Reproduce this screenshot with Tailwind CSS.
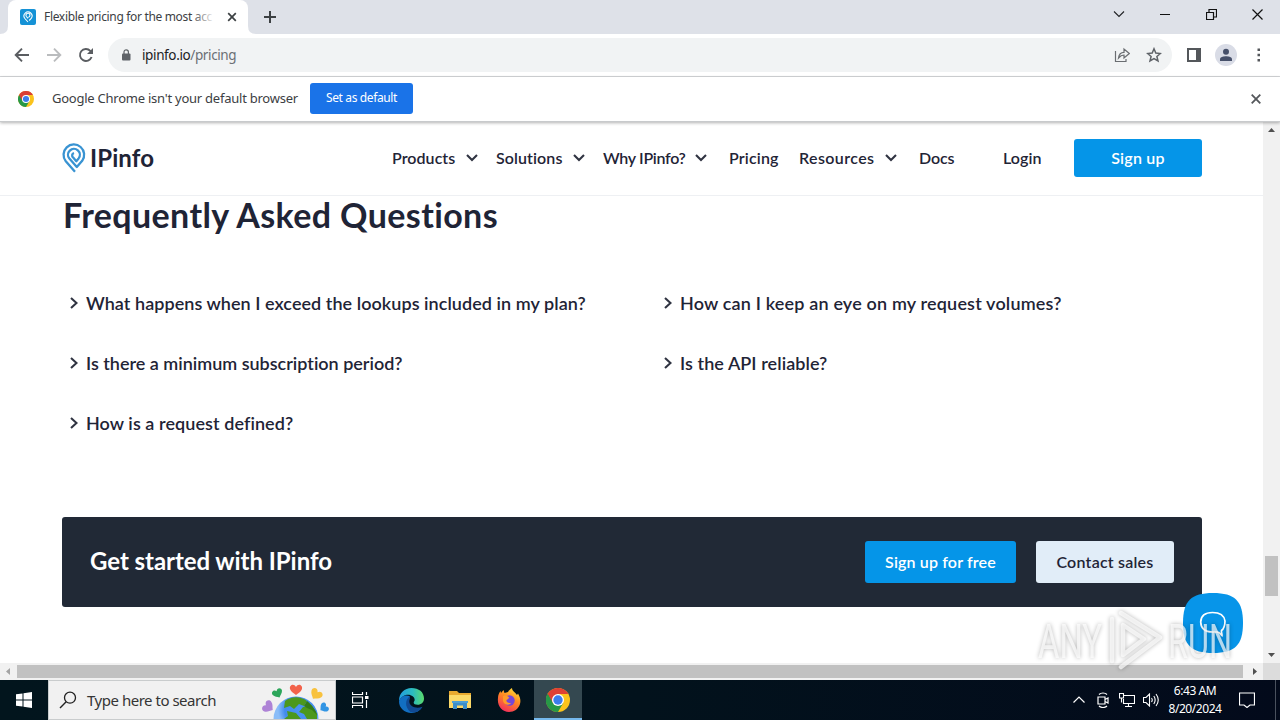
<!DOCTYPE html>
<html lang="en">
<head>
    <meta charset="UTF-8">
    <meta name="viewport" content="width=device-width, initial-scale=1.0">
    <title>Flexible pricing for the most accurate IP data</title>
    <script src="https://cdn.jsdelivr.net/npm/@tailwindcss/browser@4"></script>
</head>
<body class="w-[1280px] h-[720px] overflow-hidden bg-white font-['Noto_Sans',sans-serif] text-[#202124]">
    <div class="relative w-[1280px] h-[720px] flex flex-col">

        <!-- Tab strip -->
        <div class="h-[34px] shrink-0 bg-[#dee1e8] flex items-end">
            <svg class="w-2 h-2" viewBox="0 0 8 8"><path d="M0 8Q8 8 8 0V8Z" fill="#fff"/></svg>
            <div class="w-[240px] h-[34px] bg-white rounded-t-lg flex items-center pl-3">
                <svg class="w-4 h-4 shrink-0" viewBox="0 0 16 16">
                    <rect width="16" height="16" rx="2" fill="#1592d6"/>
                    <path d="M8 13 4.9 9.5A4 4 0 1 1 11.2 9.4L9.2 11.5M8 9.3 6.4 7.5A2 2 0 1 1 8.3 8.2" fill="none" stroke="#fff" stroke-width="1.1"/>
                </svg>
                <div class="relative ml-2 w-[171px] whitespace-nowrap text-[12px] leading-4 tracking-[-0.33px] text-[#3c4043]">
                    Flexible pricing for the most acc
                    <div class="absolute right-0 top-0 w-6 h-4 bg-linear-to-r from-white/0 to-white"></div>
                </div>
                <svg class="w-[10px] h-[10px] ml-3 shrink-0" viewBox="0 0 10 10"><path d="M1.2 1.2 8.8 8.8M8.8 1.2 1.2 8.8" stroke="#3c4043" stroke-width="1.7"/></svg>
            </div>
            <svg class="w-2 h-2" viewBox="0 0 8 8"><path d="M8 8Q0 8 0 0V8Z" fill="#fff"/></svg>
            <svg class="w-3 h-3 ml-2 mb-[11px]" viewBox="0 0 12 12"><path d="M6 0V12M0 6H12" stroke="#3c4043" stroke-width="2"/></svg>
            <div class="ml-auto h-[28px] flex items-center self-start pr-[17px]">
                <svg class="w-[12px] h-[12px]" viewBox="0 0 12 12"><path d="M1 3.5 6 8.5 11 3.5" fill="none" stroke="#202124" stroke-width="1.1"/></svg>
                <svg class="w-[10px] h-[10px] ml-[35px]" viewBox="0 0 10 10"><path d="M0 5.5H10" stroke="#111"/></svg>
                <svg class="w-[11px] h-[11px] ml-[36px]" viewBox="0 0 11 11"><path d="M.5 3.5H7.5V10.5H.5ZM3 3V.5H10.5V8H8" fill="none" stroke="#111" stroke-width="1.2"/></svg>
                <svg class="w-[11px] h-[11px] ml-[35px]" viewBox="0 0 11 11"><path d="M.5.5 10.5 10.5M10.5.5.5 10.5" stroke="#111" stroke-width="1.2"/></svg>
            </div>
        </div>

        <!-- Toolbar -->
        <div class="h-[43px] shrink-0 flex items-center border-b border-[#d5d7da] pl-[14px]">
            <svg class="w-4 h-4" viewBox="0 0 16 16"><path d="M15 8H2M8 1.7 1.7 8 8 14.3" fill="none" stroke="#5a5d61" stroke-width="1.9"/></svg>
            <svg class="w-4 h-4 ml-4" viewBox="0 0 16 16"><path d="M1 8H14M8 1.7 14.3 8 8 14.3" fill="none" stroke="#babcbe" stroke-width="1.9"/></svg>
            <svg class="w-4 h-4 ml-4" viewBox="0 0 16 16"><path d="M13.6 10A6 6 0 1 1 12.3 3.8L13.5 5" fill="none" stroke="#5a5d61" stroke-width="1.9"/><path d="M15 1V7H9Z" fill="#5a5d61"/></svg>
            <div class="ml-[14px] w-[1064px] h-[34px] rounded-full bg-[#f1f3f4] flex items-center pl-[13px] pr-[10px]">
                <svg class="w-[10px] h-3" viewBox="0 0 10 12"><rect x="1" y="4.5" width="8.5" height="7" rx="1" fill="#5f6368"/><path d="M3 5V3a2.2 2.2 0 0 1 4.4 0V5" fill="none" stroke="#5f6368" stroke-width="1.2"/></svg>
                <div class="ml-[11px] text-[13.5px] tracking-[-0.38px] text-[#6b6f74]"><span class="text-[#202124]">ipinfo.io</span>/pricing</div>
                <svg class="w-4 h-4 ml-auto" viewBox="0 0 16 16"><path d="M1.5 4V14.500H12V12M4.500 11C5 7 7 5.300 10 5.300V2L15.300 6.500 10 11V8C8 8 6.300 8.800 4.500 11Z" fill="none" stroke="#6a6d71" stroke-width="1.2"/></svg>
                <svg class="w-4 h-4 ml-4" viewBox="0 0 16 16"><path d="M8 1.800 9.800 6.100 14.400 6.500 10.900 9.500 12 14 8 11.600 4 14 5.100 9.500 1.600 6.500 6.200 6.100Z" fill="none" stroke="#5f6368" stroke-width="1.500"/></svg>
            </div>
            <svg class="w-[14px] h-[14px] ml-[15px]" viewBox="0 0 14 14"><path d="M0 0H14V14H0ZM2 2V12H9V2Z" fill="#54575b"/></svg>
            <svg class="w-[22px] h-[22px] ml-[14px]" viewBox="0 0 22 22"><circle cx="11" cy="11" r="11" fill="#d9dce6"/><circle cx="11" cy="7.700" r="3" fill="#46506a"/><path d="M5 17V15.500C5 12.900 8.500 12.300 11 12.300S17 12.900 17 15.500V17Z" fill="#46506a"/></svg>
            <svg class="w-1 h-[14px] ml-[20px]" viewBox="0 0 4 14"><path d="M.5.500H3V3H.5ZM.5 5.700H3V8.200H.5ZM.5 11H3V13.500H.5Z" fill="#54575b"/></svg>
        </div>

        <!-- Default browser bar -->
        <div class="relative z-10 h-[45px] shrink-0 bg-white flex items-center pl-[18px] border-b border-[#c8cacc] shadow-[0_1px_3px_rgba(0,0,0,0.3)]">
            <svg class="w-4 h-4" viewBox="0 0 24 24">
                <circle cx="12" cy="12" r="12" fill="#fbc31c"/>
                <path d="M1.600 6A12 12 0 0 0 12 24L17.200 15 12 12Z" fill="#279847"/>
                <path d="M1.600 6A12 12 0 0 1 22.400 6H12L6.800 15Z" fill="#d93e35"/>
                <circle cx="12" cy="12" r="6" fill="#fff"/><circle cx="12" cy="12" r="4.600" fill="#3b7ded"/>
            </svg>
            <div class="ml-[18px] w-[258px] whitespace-nowrap text-[13px] tracking-[-0.24px] text-[#3c4043]">Google Chrome isn't your default browser</div>
            <div class="w-[103px] h-[31px] -mt-[2px] rounded-[3px] bg-[#1a73e8] flex items-center justify-center text-white text-[12px] tracking-[-0.38px]">Set as default</div>
            <svg class="w-[10px] h-[10px] ml-auto mr-[19px]" viewBox="0 0 10 10"><path d="M.7.700 9.300 9.300M9.300.7.700 9.300" stroke="#54575b" stroke-width="1.800"/></svg>
        </div>

        <!-- Page and vertical scrollbar -->
        <div class="h-[541px] shrink-0 flex">
            <div class="w-[1263px] h-full flex flex-col font-['Lato',sans-serif] text-[#1f2436]">
                <div class="h-[74px] shrink-0 flex items-center border-b border-[#eef0f3] pl-[62px] pb-px font-semibold text-[16px]">
                    <svg class="w-6 h-[30px]" viewBox="0 0 24 30"><path d="M13 28.800 3.800 18.200A10.300 10.300 0 1 1 20.200 17.800L14.800 24L7.400 15.600A5.900 5.900 0 1 1 16.600 15.400L14.300 18.200L11.200 14.600A2.600 2.600 0 0 1 12 10" fill="none" stroke="#3993d2" stroke-width="2.300" stroke-linejoin="round"/></svg>
                    <div class="ml-1 w-[302px] text-[24px] font-bold tracking-[0.1px] leading-6">IPinfo</div>
                    <div class="w-[74px] tracking-[0.05px]">Products</div>
                    <svg class="w-3 h-2" viewBox="0 0 12 8"><path d="M1 1 6 6 11 1" fill="none" stroke="#303442" stroke-width="2.100"/></svg>
                    <div class="ml-[18px] w-[77px] tracking-[0.1px]">Solutions</div>
                    <svg class="w-3 h-2" viewBox="0 0 12 8"><path d="M1 1 6 6 11 1" fill="none" stroke="#303442" stroke-width="2.100"/></svg>
                    <div class="ml-[18px] w-[92px] whitespace-nowrap tracking-[-0.3px]">Why IPinfo?</div>
                    <svg class="w-3 h-2" viewBox="0 0 12 8"><path d="M1 1 6 6 11 1" fill="none" stroke="#303442" stroke-width="2.100"/></svg>
                    <div class="ml-[22px] w-[70px] tracking-[0.15px]">Pricing</div>
                    <div class="w-[86px] tracking-[0.4px]">Resources</div>
                    <svg class="w-3 h-2" viewBox="0 0 12 8"><path d="M1 1 6 6 11 1" fill="none" stroke="#303442" stroke-width="2.100"/></svg>
                    <div class="ml-[22px] w-[84px] tracking-[-0.1px]">Docs</div>
                    <div class="w-[71px] tracking-[0.1px]">Login</div>
                    <div class="w-[128px] h-[38px] rounded-[3px] bg-[#0595e8] text-white flex items-center justify-center tracking-[0.25px]">Sign up</div>
                </div>

                <div class="pl-[62px] w-[1202px]">
                    <h1 class="h-[40px] pl-px text-[34px] leading-[38px] font-bold whitespace-nowrap tracking-[0.38px]">Frequently Asked Questions</h1>
                    <div class="mt-[57px] grid grid-cols-[594px_1fr] auto-rows-[20px] gap-y-[40px] pl-[8px] text-[18px] leading-5 font-semibold whitespace-nowrap">
                        <div class="flex items-center gap-2 tracking-[0.05px]"><svg class="w-2 h-3" viewBox="0 0 8 12"><path d="M1 1 6.500 6 1 11" fill="none" stroke="#303442" stroke-width="2.100"/></svg>What happens when I exceed the lookups included in my plan?</div>
                        <div class="flex items-center gap-2 tracking-[0.17px]"><svg class="w-2 h-3" viewBox="0 0 8 12"><path d="M1 1 6.500 6 1 11" fill="none" stroke="#303442" stroke-width="2.100"/></svg>How can I keep an eye on my request volumes?</div>
                        <div class="flex items-center gap-2 tracking-[-0.01px]"><svg class="w-2 h-3" viewBox="0 0 8 12"><path d="M1 1 6.500 6 1 11" fill="none" stroke="#303442" stroke-width="2.100"/></svg>Is there a minimum subscription period?</div>
                        <div class="flex items-center gap-2 tracking-[0.07px]"><svg class="w-2 h-3" viewBox="0 0 8 12"><path d="M1 1 6.500 6 1 11" fill="none" stroke="#303442" stroke-width="2.100"/></svg>Is the API reliable?</div>
                        <div class="flex items-center gap-2 tracking-[0.07px]"><svg class="w-2 h-3" viewBox="0 0 8 12"><path d="M1 1 6.500 6 1 11" fill="none" stroke="#303442" stroke-width="2.100"/></svg>How is a request defined?</div>
                    </div>
                    <div class="mt-[84px] w-[1140px] h-[90px] rounded-[3px] bg-[#212936] flex items-center px-7 text-[16px] font-semibold">
                        <div class="text-[24px] font-bold text-white tracking-[-0.05px] -mt-[2px]">Get started with IPinfo</div>
                        <div class="ml-auto w-[151px] h-[42px] rounded-[3px] bg-[#0595e8] text-white flex items-center justify-center tracking-[0.15px]">Sign up for free</div>
                        <div class="ml-5 w-[138px] h-[42px] rounded-[3px] bg-[#e1edf8] flex items-center justify-center tracking-[0.22px]">Contact sales</div>
                    </div>
                </div>
            </div>
            <div class="w-[17px] h-full bg-[#f1f1f1] flex flex-col items-center justify-between py-[6px]">
                <svg class="w-[7px] h-1" viewBox="0 0 7 4"><path d="M0 4 3.500 0 7 4Z" fill="#505050"/></svg>
                <div class="w-[13px] h-10 mt-[424px] bg-[#c1c1c1]"></div>
                <svg class="w-[7px] h-1 mt-auto" viewBox="0 0 7 4"><path d="M0 0 3.500 4 7 0Z" fill="#505050"/></svg>
            </div>
        </div>

        <!-- Horizontal scrollbar -->
        <div class="h-[17px] shrink-0 bg-[#f1f1f1] flex items-center">
            <svg class="w-1 h-[7px] ml-[6px]" viewBox="0 0 4 7"><path d="M4 0 0 3.500 4 7Z" fill="#a3a3a3"/></svg>
            <div class="ml-[7px] w-[1226px] h-[13px] bg-[#c1c1c1]"></div>
            <svg class="w-1 h-[7px] ml-[10px]" viewBox="0 0 4 7"><path d="M0 0 4 3.500 0 7Z" fill="#505050"/></svg>
            <div class="ml-auto w-[17px] h-full bg-[#dcdcdc]"></div>
        </div>

        <!-- Taskbar -->
        <div class="h-10 shrink-0 bg-linear-to-r from-[#02151d] via-[#02121c] to-[#030a1b] flex items-center text-white">
            <svg class="w-4 h-4 ml-4" viewBox="0 0 16 16"><path d="M0 2.300 6.500 1.400V7.500H0ZM7.500 1.200 16 0V7.500H7.500ZM0 8.500H6.500V14.600L0 13.700ZM7.500 8.500H16V16L7.500 14.800Z" fill="#fff"/></svg>
            <div class="ml-4 w-[288px] h-10 bg-[#f1f1f1] border border-[#c9cccd] flex items-center text-[#353535]">
                <svg class="w-[18px] h-[18px] ml-[10px]" viewBox="0 0 18 18"><circle cx="11" cy="6.700" r="5.500" fill="none" stroke="#222" stroke-width="1.300"/><path d="M7.200 10.800 1 17" stroke="#222" stroke-width="1.400"/></svg>
                <div class="ml-[10px] w-[174px] text-[15px] tracking-[-0.48px] whitespace-nowrap">Type here to search</div>
                <svg class="w-[70px] h-[38px]" viewBox="0 0 70 38">
                    <defs><radialGradient id="sea" cx=".6" cy=".3"><stop offset="0" stop-color="#4b95f3"/><stop offset=".7" stop-color="#438bec"/><stop offset="1" stop-color="#8abdf8"/></radialGradient></defs>
                    <circle cx="35" cy="38" r="22.500" fill="url(#sea)"/>
                    <path d="M24 20C31 15 39 15 46 20L43 25 38 23 33 28 29 25 23 27ZM42 26C50 24 54 28 56 33V38H46L43 33 38 31ZM26 30 35 32 40 38H23L27 35Z" fill="#4c981d"/>
                    <path d="M46 20C51 24 55 29 56 34L51 29 46 27 43 25Z" fill="#347c17"/>
                    <path d="M0-1C-2-5-7-3-6 1-5 4-2 5 0 7 2 5 5 4 6 1 7-3 2-5 0-1Z" transform="translate(35 7)" fill="#f2624b"/>
                    <path d="M0-1C-2-5-7-3-6 1-5 4-2 5 0 7 2 5 5 4 6 1 7-3 2-5 0-1Z" transform="translate(16 11) rotate(-25) scale(.85)" fill="#2ca65a"/>
                    <path d="M0-1C-2-5-7-3-6 1-5 4-2 5 0 7 2 5 5 4 6 1 7-3 2-5 0-1Z" transform="translate(56 12) rotate(35)" fill="#f8c23e"/>
                    <path d="M0-1C-2-5-7-3-6 1-5 4-2 5 0 7 2 5 5 4 6 1 7-3 2-5 0-1Z" transform="translate(6 25) rotate(-55)" fill="#ae83d6"/>
                    <path d="M0-1C-2-5-7-3-6 1-5 4-2 5 0 7 2 5 5 4 6 1 7-3 2-5 0-1Z" transform="translate(64 26) rotate(55) scale(.8)" fill="#3295e4"/>
                </svg>
            </div>
            <svg class="w-[17px] h-4 ml-4" viewBox="0 0 17 16"><path d="M.5 0V2.500H10.500V0M.5 5H10.500V11H.5ZM.5 16V13.500H10.500V16M14.500 0V3M14.500 8V16" fill="none" stroke="#fff" stroke-width="1.200"/><path d="M13 4H16.500V7H13Z" fill="#fff"/></svg>
            <svg class="w-[25px] h-[25px] ml-[30px]" viewBox="0 0 24 24">
                <defs>
                    <linearGradient id="edge" x1="0" x2="1"><stop stop-color="#239ee0"/><stop offset=".55" stop-color="#2bbcc0"/><stop offset="1" stop-color="#5bdb6b"/></linearGradient>
                </defs>
                <path d="M0 13C-.2 5 5 0 12 0 19 0 24 4 24 10 24 14 21 16 18 16 14.500 16 13.500 14.500 14.500 13 17 9 10 4 4 8 2 9 .7 11 0 13Z" fill="url(#edge)"/>
                <path d="M0 13C1 8 6 6 10.500 8 7 12 9 19 15 20 18 20.500 20.500 19.500 22.500 18 20 22 16.500 24 12 24 5 24 0 19 0 13Z" fill="#126fc2"/>
                <path d="M10.500 8C6 11 5 18 11 23 16 24.500 20.500 21.500 22.500 18 16 21 7.500 17 10.500 10Z" fill="#114a93"/>
            </svg>
            <svg class="w-[22px] h-[20px] ml-[25px]" viewBox="0 0 22 20"><path d="M0 1H8L10 3H22V18H0Z" fill="#e8a92f"/><path d="M0 5H22V18H0Z" fill="#fbd968"/><path d="M4 11H18V19H14V15.500H8V19H4Z" fill="#3b8fca"/><path d="M3 11H19V13H3Z" fill="#4ba0d7"/></svg>
            <svg class="w-6 h-6 ml-[26px]" viewBox="0 0 24 24">
                <defs><linearGradient id="fox" x1=".8" y1="0" x2=".3" y2="1"><stop stop-color="#ffe338"/><stop offset=".45" stop-color="#ff8a22"/><stop offset="1" stop-color="#f32c5d"/></linearGradient></defs>
                <path d="M1 10C1 7 2 5 3.500 3L4 5 6.500 2 7.500 5 11 4C12 2 13.500 1 15 0 15 3 18 4 20 7L21 5.500C23 9 24 12 23 16 21.500 21 17 24 12 24 5 24 0 18 1 10Z" fill="url(#fox)"/>
                <circle cx="12.500" cy="12.500" r="5.200" fill="#7546d9"/><path d="M6 8C9 7 11 8 12.500 10 11 10.200 11 11.500 9.500 12 9 14 11 15.500 14 15 12 18 7 17 6 13Z" fill="#ff9b28"/>
            </svg>
            <div class="ml-[13px] w-12 h-10 pt-[2px] bg-[#344850] border-b-2 border-[#76b9ed] flex items-center justify-center">
                <svg class="w-6 h-6" viewBox="0 0 24 24">
                    <circle cx="12" cy="12" r="12" fill="#fbc31c"/>
                    <path d="M1.600 6A12 12 0 0 0 12 24L17.200 15 12 12Z" fill="#279847"/>
                    <path d="M1.600 6A12 12 0 0 1 22.400 6H12L6.800 15Z" fill="#df4034"/>
                    <path d="M1.600 6A12 12 0 0 0 4 21L12 18 6.800 15Z" fill="#279847"/>
                    <circle cx="12" cy="12" r="6" fill="#fff"/><circle cx="12" cy="12" r="4.700" fill="#3b7ded"/>
                </svg>
            </div>
            <svg class="w-3 h-2 ml-auto" viewBox="0 0 12 8"><path d="M.5 6.500 6 1 11.500 6.500" fill="none" stroke="#fff" stroke-width="1.200"/></svg>
            <svg class="w-3 h-4 ml-[12px]" viewBox="0 0 12 16"><path d="M1 5H8V12H1ZM8 7.500 11 6V11L8 9.500M2 2.500C4 .5 8 .5 10 2.500M2 14C4 16 8 16 10 14" fill="none" stroke="#fff" stroke-width="1.200"/></svg>
            <svg class="w-4 h-[14px] ml-[10px]" viewBox="0 0 16 14"><path d="M5 2.500H15.500V10.500H4.500V6M9.500 10.500V13.500M6 13.500H13M.5.500H4.500V5H.5ZM2.500 5V9.500" fill="none" stroke="#fff" stroke-width="1.100"/></svg>
            <svg class="w-[17px] h-[14px] ml-[8px]" viewBox="0 0 17 14"><path d="M.5 4.500H3L6.500 1V13L3 9.500H.5ZM8.500 5Q10 7 8.500 9M10.800 3Q13.500 7 10.800 11M13 1Q17.500 7 13 13" fill="none" stroke="#fff" stroke-width="1.100"/></svg>
            <div class="w-[70px] text-center text-[12px] leading-[18px] tracking-[-0.45px] whitespace-nowrap">6:43 AM<br>8/20/2024</div>
            <svg class="w-4 h-4 ml-[9px] mr-[24px]" viewBox="0 0 16 16"><path d="M.5 1H15.500V13H11L8 15.500 5 13H.5Z" fill="none" stroke="#fff" stroke-width="1.200"/></svg>
            <div class="w-px h-10 bg-[#4a515e] mr-[4px] -ml-[4px]"></div>
        </div>

        <!-- Chat launcher -->
        <svg class="absolute left-[1183px] top-[593px] w-[60px] h-[60px]" viewBox="0 0 60 60">
            <path d="M30 0C52 0 60 8 60 30S52 60 30 60 0 52 0 30 8 0 30 0Z" fill="#0795e9"/>
            <path d="M34 39C37 39 37.500 41.500 39 42.500 39.300 41 38 39.500 38.500 37.500 42 35 42 31 42 28 41 21 36 19.500 29.500 19.500 23 19.500 18 21.500 17.700 29 18 37 23 39 29.500 39Z" fill="none" stroke="#fff" stroke-width="1.700"/>
        </svg>

        <!-- Watermark -->
        <div class="absolute left-[1039px] top-[608px] w-[200px] h-[64px] flex items-center font-['Roboto',sans-serif] text-white/70">
            <svg class="w-[200px] h-[64px] overflow-visible drop-shadow-[0_0_2px_rgba(0,0,0,0.4)]" viewBox="0 0 200 64">
                <g fill="currentColor" font-size="49" font-weight="400">
                    <text x="-1" y="50" textLength="64" lengthAdjust="spacingAndGlyphs">ANY</text>
                    <text x="129" y="50" textLength="64" lengthAdjust="spacingAndGlyphs">RUN</text>
                </g>
                <path d="M82 5 121 29.500 82 59M84 17V47L105 31ZM73 11V53" fill="none" stroke="currentColor" stroke-width="4.500" stroke-linejoin="round" stroke-linecap="round"/>
            </svg>
        </div>
    </div>
</body>
</html>
